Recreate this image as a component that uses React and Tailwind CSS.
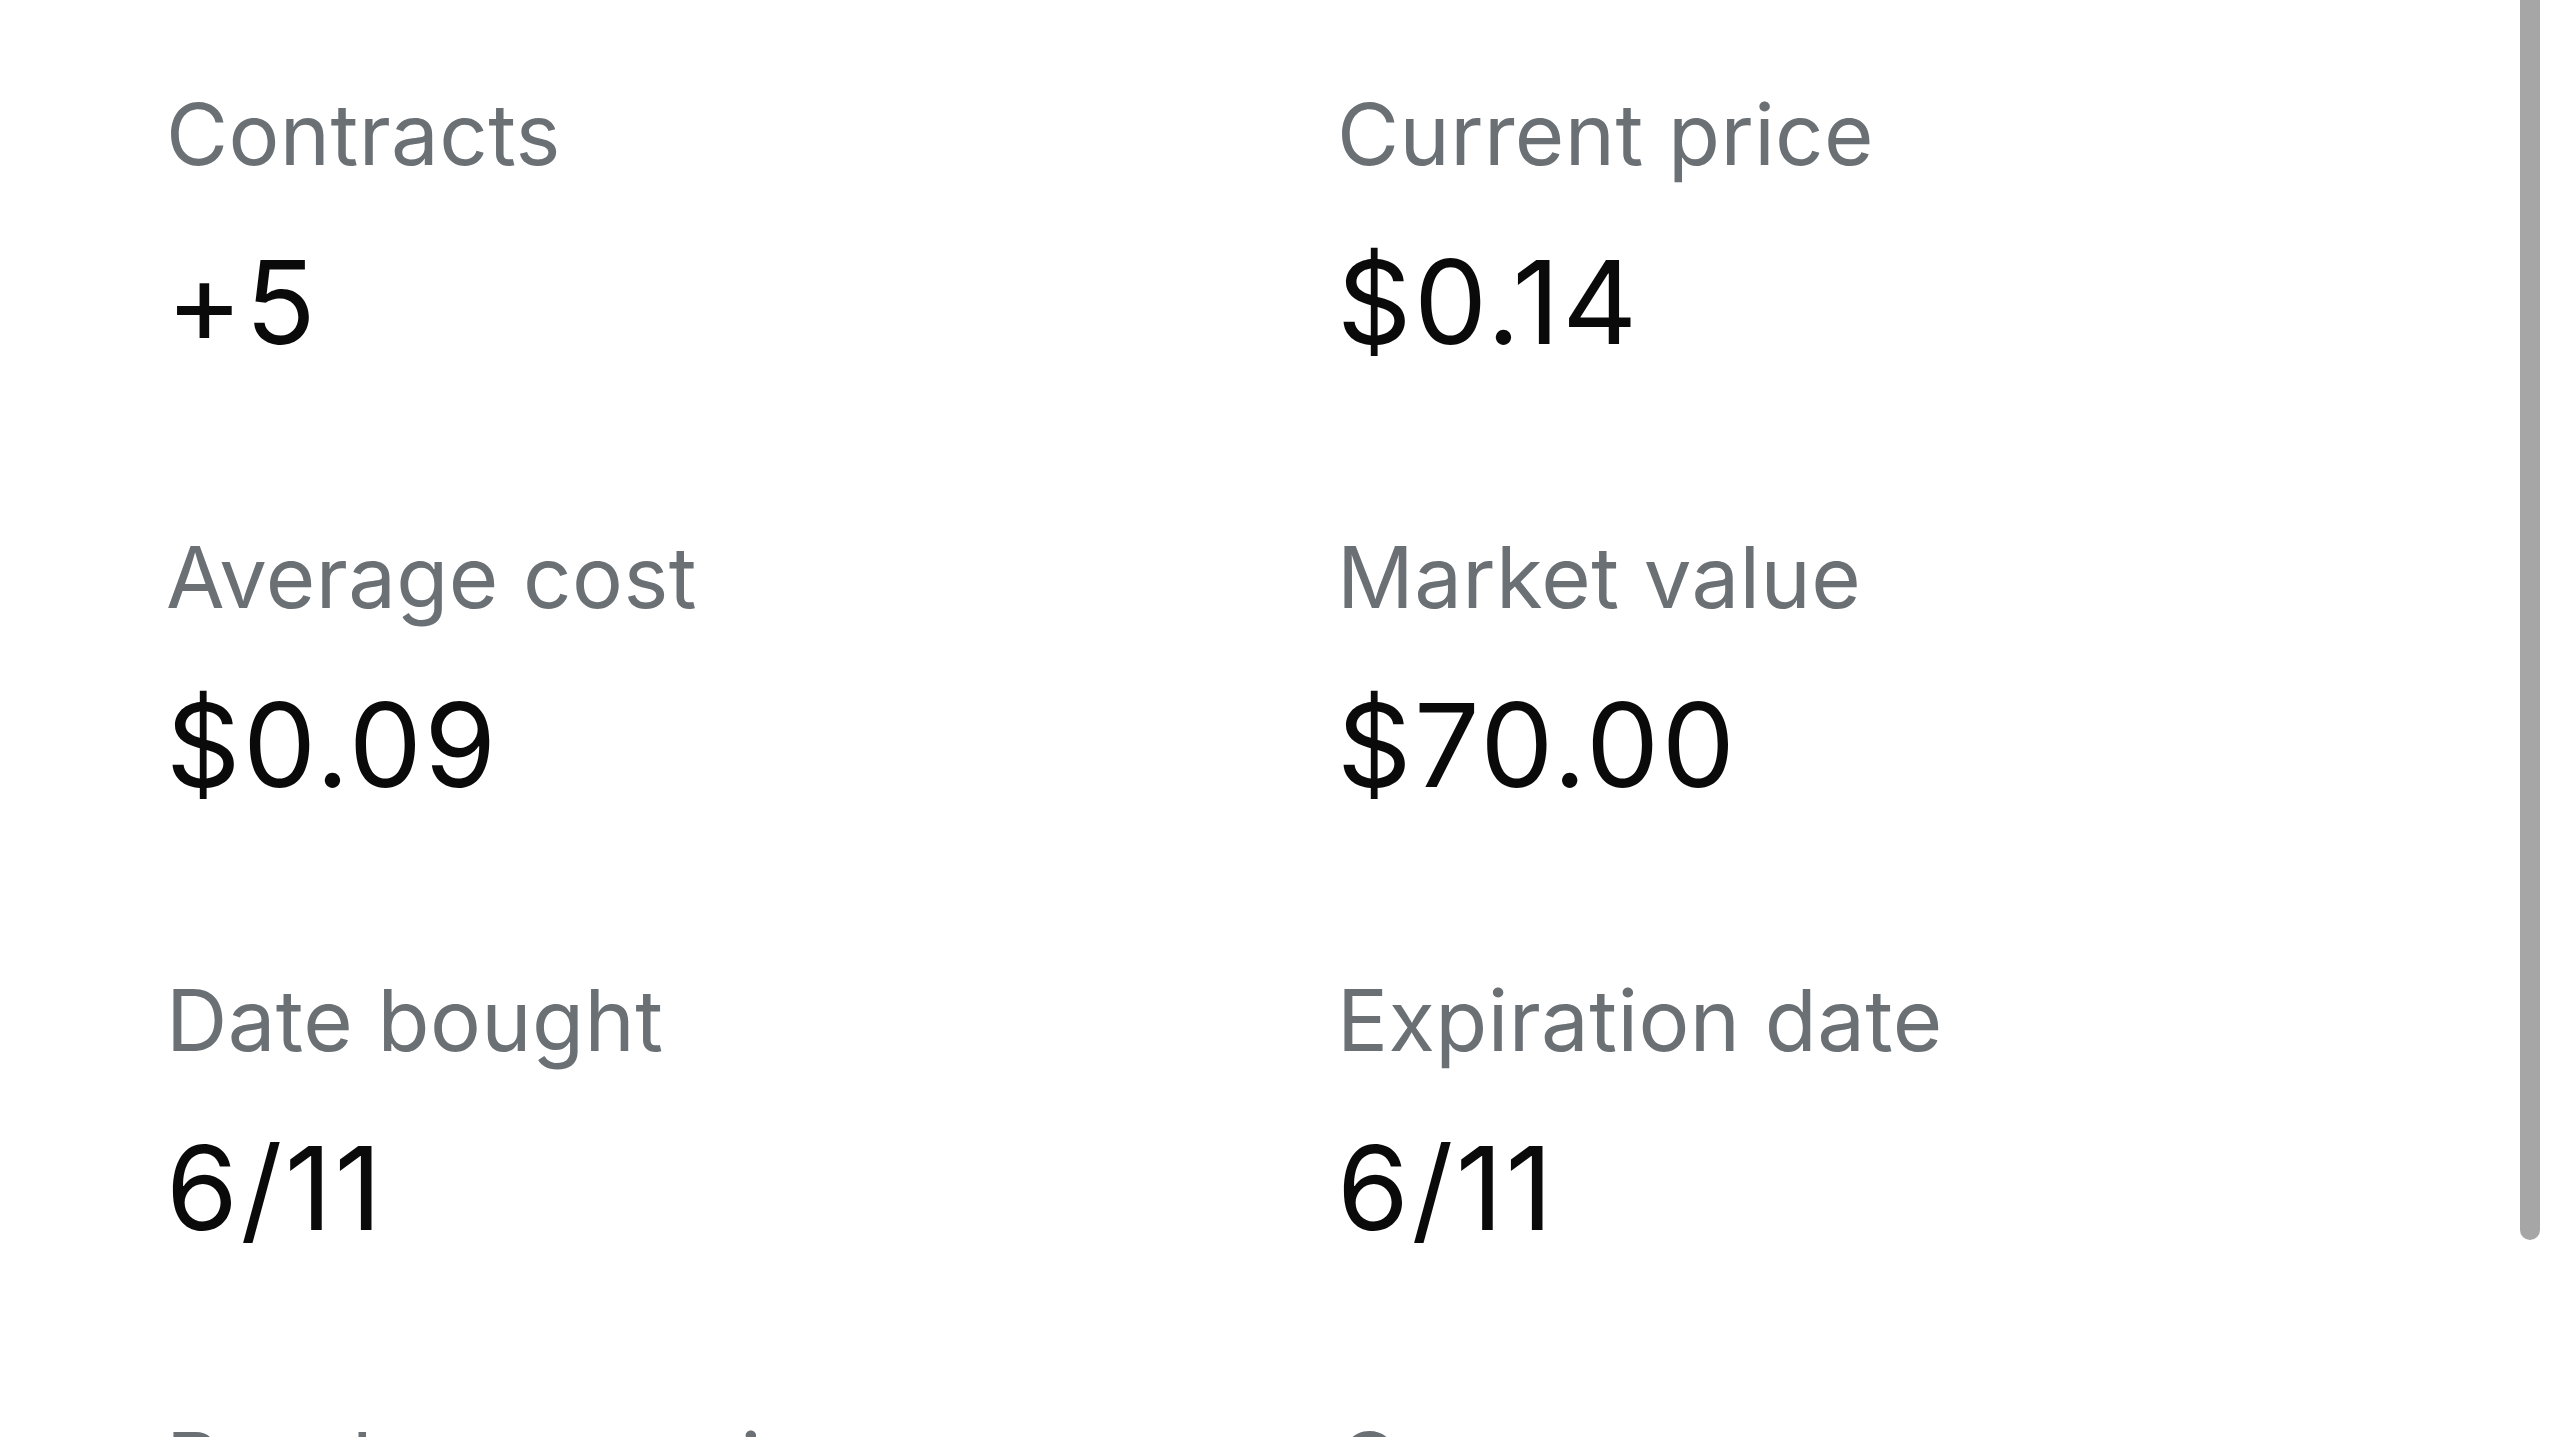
import React from 'react';

const rows = [
  ['Contracts', '+5', 'Current price', '$0.14'],
  ['Average cost', '$0.09', 'Market value', '$70.00'],
  ['Date bought', '6/11', 'Expiration date', '6/11'],
  ['Break-even price', '$0.19', 'Current return', '+$25.00'],
];

const Stat = ({ label, value }) => (
  <div className="flex flex-col">
    <span className="text-[85px] leading-none tracking-[0.4px] text-[#6b7075]">{label}</span>
    <span className="mt-[67px] text-[116px] leading-none tracking-[2.5px] text-[#0a0a0a]">{value}</span>
  </div>
);

export default function App() {
  return (
    <div className="relative h-[1437px] w-full overflow-hidden bg-white" style={{ fontFamily: 'Inter, "Noto Sans", sans-serif' }}>
      <div className="grid grid-cols-[1171px_1fr] gap-y-[175px] pl-[166px] pt-[92px]">
        {rows.map(([l1, v1, l2, v2]) => (
          <React.Fragment key={l1}>
            <Stat label={l1} value={v1} />
            <Stat label={l2} value={v2} />
          </React.Fragment>
        ))}
      </div>

      {/* scroll thumb */}
      <div className="absolute right-[20px] top-[-20px] h-[1260px] w-[20px] rounded-full bg-[#a6a6a6]" />
    </div>
  );
}
